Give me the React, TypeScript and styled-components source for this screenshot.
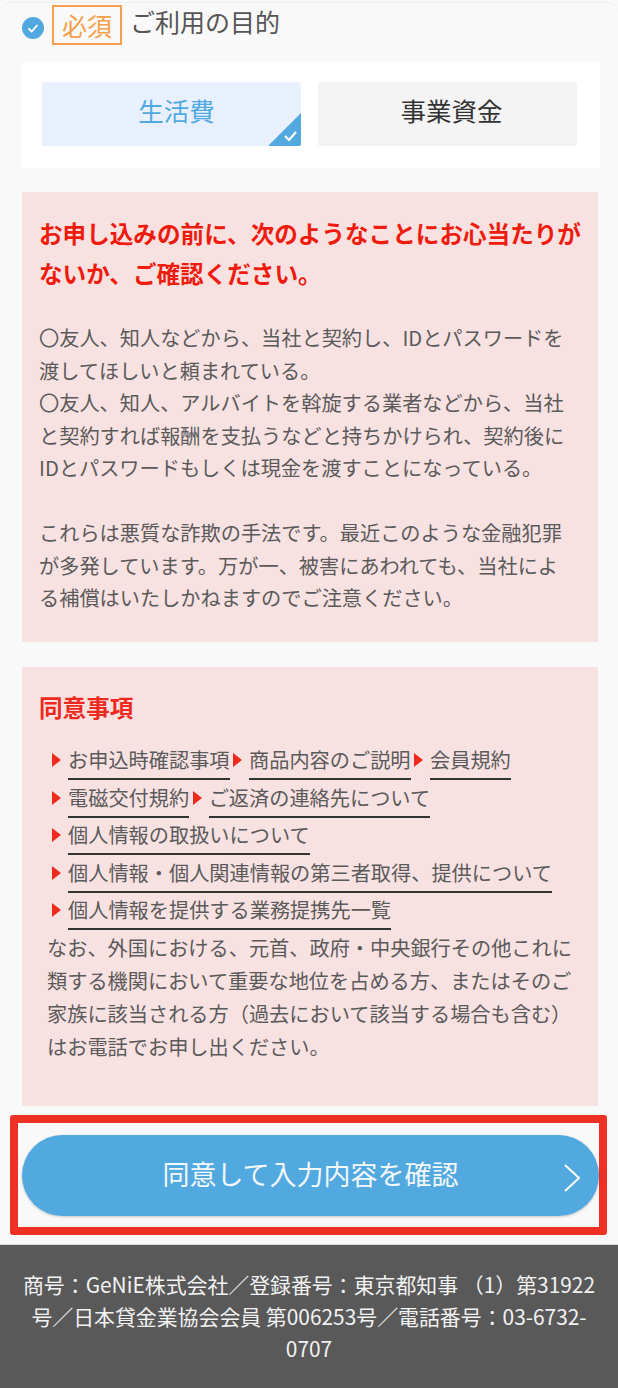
import { Fragment } from "react";
import styled, { createGlobalStyle } from "styled-components";

const GlobalStyle = createGlobalStyle`
  html, body {
    margin: 0;
    padding: 0;
    background: #f9f9f9;
  }
  * {
    box-sizing: border-box;
  }
`;

const Page = styled.div`
  width: 618px;
  height: 1388px;
  overflow: hidden;
  display: flex;
  flex-direction: column;
  font-family: "Noto Sans CJK JP", "Liberation Sans", sans-serif;
  color: #5a5a5a;
`;

const Card = styled.div`
  margin-top: 2px;
  padding: 0 20px 0 22px;
  border-top: 1px solid #eeeeee;
  border-radius: 10px 10px 0 0;
`;

const Heading = styled.div`
  height: 57px;
  display: flex;
  align-items: center;
  padding-bottom: 13px;
  gap: 8px;
`;

const CheckDot = styled.svg`
  flex: none;
  width: 22px;
  height: 22px;
  margin-top: 5px;
`;

const Badge = styled.span`
  width: 70px;
  height: 40px;
  border: 2px solid #f5a04c;
  color: #f5a04c;
  font-size: 25px;
  line-height: 36px;
  text-align: center;
`;

const HeadingText = styled.span`
  font-size: 25px;
  line-height: 36px;
  color: #555;
  margin-top: -8px;
`;

const ChoicePanel = styled.div`
  margin-top: 2px;
  height: 106px;
  width: 578px;
  background: #fff;
  padding: 20px 23px 22px 20px;
  display: flex;
  gap: 17px;
`;

const Choice = styled.div<{ $active?: boolean }>`
  position: relative;
  flex: none;
  width: 259px;
  display: flex;
  align-items: center;
  justify-content: center;
  border-radius: 2px;
  overflow: hidden;
  font-size: 25.5px;
  padding: 0 0 9px ${(props) => (props.$active ? "10px" : "8px")};
  background: ${(props) => (props.$active ? "#e8f0fe" : "#f4f4f4")};
  color: ${(props) => (props.$active ? "#52a9e0" : "#333")};
`;

const Corner = styled.svg`
  position: absolute;
  right: 0;
  bottom: 0;
  width: 33px;
  height: 33px;
`;

const Notice = styled.section<{ $height: number }>`
  margin-top: 24px;
  width: 576px;
  height: ${(props) => props.$height}px;
  background: #f8e1e1;
  padding: 0 16px 0 17px;
`;

const AlertTitle = styled.h2`
  margin: 0;
  padding-top: 21px;
  font-size: 23.6px;
  line-height: 40px;
  font-weight: 700;
  color: #ee1c0e;
`;

const Body = styled.p`
  margin: 29px 8px 0 0;
  font-size: 20.2px;
  line-height: 32.5px;
`;

const AgreeNotice = styled(Notice)`
  margin-top: 25px;
  padding: 0 17px;
`;

const AgreeTitle = styled.h3`
  margin: 0;
  padding-top: 24px;
  font-size: 23.6px;
  line-height: 32px;
  font-weight: 700;
  color: #ee2a1e;
`;

const LinkList = styled.ul`
  list-style: none;
  margin: 21px 0 0;
  padding: 0 0 0 12px;
`;

const LinkRow = styled.li`
  display: flex;
  align-items: flex-start;
  height: 37.6px;
`;

const Arrow = styled.span`
  flex: none;
  width: 0;
  height: 0;
  margin: 9px 7px 0 1px;
  border-left: 9px solid #ee2a1e;
  border-top: 7.5px solid transparent;
  border-bottom: 7.5px solid transparent;
`;

const DocLink = styled.a`
  font-size: 20.2px;
  line-height: 32px;
  height: 36px;
  color: #5a5a5a;
  border-bottom: 2px solid #333;
  white-space: nowrap;
  margin-right: 2.5px;
`;

const AgreeBody = styled.p`
  margin: -1px 0 0 8px;
  font-size: 20.2px;
  line-height: 33px;
`;

const Highlight = styled.div`
  margin: 9px 0 0 -12px;
  width: 597px;
  height: 120px;
  border: 8px solid #ee3124;
  border-radius: 3px;
  padding: 12px 0 0 4px;
`;

const SubmitButton = styled.button`
  position: relative;
  display: block;
  width: 577px;
  height: 81px;
  border: none;
  border-radius: 41px;
  background: #52a9e0;
  color: #f2f8fc;
  font-family: inherit;
  font-size: 27px;
  padding: 0 0 5px;
  box-shadow: 0 1px 3px rgba(0, 0, 0, 0.2);
`;

const Chevron = styled.svg`
  position: absolute;
  right: 17px;
  top: 27px;
  width: 20px;
  height: 32px;
`;

const Footer = styled.footer`
  margin-top: 9px;
  flex: 1;
  background: #595959;
  border-top: 1px solid #ddd;
  color: #f2f2f2;
  font-size: 20.9px;
  line-height: 32px;
  text-align: center;
  padding: 23px 15px 0;
`;

const links = [
  ["お申込時確認事項", "商品内容のご説明", "会員規約"],
  ["電磁交付規約", "ご返済の連絡先について"],
  ["個人情報の取扱いについて"],
  ["個人情報・個人関連情報の第三者取得、提供について"],
  ["個人情報を提供する業務提携先一覧"],
];

function App() {
  return (
    <>
      <GlobalStyle />
      <Page>
        <Card>
          <Heading>
            <CheckDot viewBox="0 0 22 22">
              <circle cx="11" cy="11" r="11" fill="#52a9e0" />
              <path d="M6.5 11.5l3.2 3 5.8-6.5" fill="none" stroke="#fff" strokeWidth="1.8" />
            </CheckDot>
            <Badge>必須</Badge>
            <HeadingText>ご利用の目的</HeadingText>
          </Heading>
          <ChoicePanel>
            <Choice $active>
              生活費
              <Corner viewBox="0 0 33 33">
                <path d="M33 0V33H0Z" fill="#52a9e0" />
                <path d="M17 23l4 4 7-8" fill="none" stroke="#fff" strokeWidth="2.2" />
              </Corner>
            </Choice>
            <Choice>事業資金</Choice>
          </ChoicePanel>
          <Notice $height={450}>
            <AlertTitle>お申し込みの前に、次のようなことにお心当たりがないか、ご確認ください。</AlertTitle>
            <Body>
              〇友人、知人などから、当社と契約し、IDとパスワードを渡してほしいと頼まれている。
              <br />
              〇友人、知人、アルバイトを斡旋する業者などから、当社と契約すれば報酬を支払うなどと持ちかけられ、契約後にIDとパスワードもしくは現金を渡すことになっている。
              <br />
              <br />
              これらは悪質な詐欺の手法です。最近このような金融犯罪が多発しています。万が一、被害にあわれても、当社による補償はいたしかねますのでご注意ください。
            </Body>
          </Notice>
          <AgreeNotice $height={439}>
            <AgreeTitle>同意事項</AgreeTitle>
            <LinkList>
              {links.map((row) => (
                <LinkRow key={row[0]}>
                  {row.map((label) => (
                    <Fragment key={label}>
                      <Arrow />
                      <DocLink>{label}</DocLink>
                    </Fragment>
                  ))}
                </LinkRow>
              ))}
            </LinkList>
            <AgreeBody>
              なお、外国における、元首、政府・中央銀行その他これに類する機関において重要な地位を占める方、またはそのご家族に該当される方（過去において該当する場合も含む）はお電話でお申し出ください。
            </AgreeBody>
          </AgreeNotice>
          <Highlight>
            <SubmitButton>
              同意して入力内容を確認
              <Chevron viewBox="0 0 20 32">
                <path d="M3 3l14 13L3 29" fill="none" stroke="#fff" strokeWidth="2" />
              </Chevron>
            </SubmitButton>
          </Highlight>
        </Card>
        <Footer>
          商号：GeNiE株式会社／登録番号：東京都知事 （1）第31922号／日本貸金業協会会員 第006253号／電話番号：03-6732-0707
        </Footer>
      </Page>
    </>
  );
}

export default App;
